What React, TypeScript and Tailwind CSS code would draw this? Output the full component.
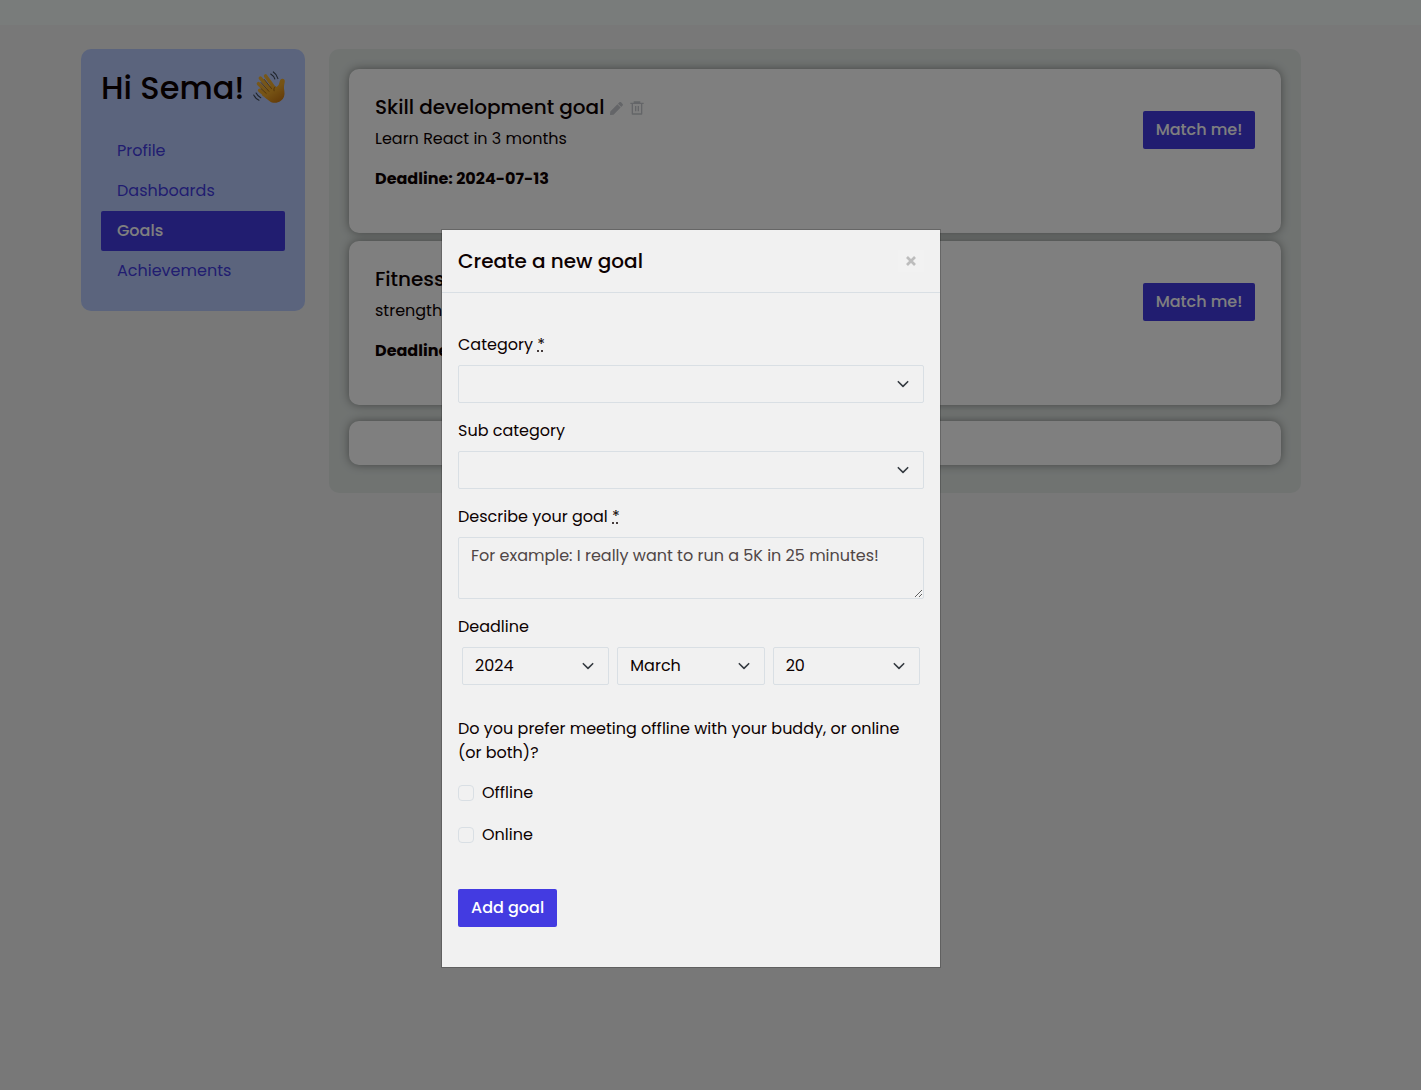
import React from "react";
import { FaPen } from "react-icons/fa";
import { RiDeleteBin6Line } from "react-icons/ri";

const links = ["Profile", "Dashboards", "Goals", "Achievements"];

function WavingHand() {
  return (
    <svg viewBox="0 0 36 36" className="h-[34px] w-[34px] shrink-0" role="img" aria-label="Waving hand">
      <defs>
        <linearGradient id="skin" gradientUnits="userSpaceOnUse" x1="6" y1="6" x2="26" y2="34">
          <stop offset="0" stopColor="#efb238" />
          <stop offset="0.6" stopColor="#eda628" />
          <stop offset="1" stopColor="#c97812" />
        </linearGradient>
      </defs>
      <g stroke="url(#skin)" strokeWidth="3.800" strokeLinecap="round" fill="none">
        <path d="M7 20.500 15 27" />
        <path d="M5.800 13.500 16 23.500" />
        <path d="M7.800 7.500 18.500 20" />
        <path d="M13.300 5.300 22.500 18" />
      </g>
      <path
        d="M12 22.500 15.500 18.500 20 14.500 23.500 17.500c2.300-.6 4-2.400 4.400-5 .4-2.900 1.700-4.600 3.700-4.300 1.900.3 2.400 2 1.900 4-.8 3.500-.9 5.800-.3 9 .7 4.500-.5 8-3.700 10.300-4.200 3-8.800 2.900-12.500-.1L9.500 25.800Z"
        fill="url(#skin)"
      />
      <path
        d="m8.500 18.700 5.500 5M8.500 12.200l8.300 9.300M12 9l7.600 9.600M23.500 16.800c-1.300 1-1.700 2.600-1.200 4.200"
        stroke="#9a5f0c"
        strokeWidth="0.900"
        strokeLinecap="round"
        fill="none"
      />
      <g stroke="#3f4858" strokeWidth="1.200" strokeLinecap="round" fill="none">
        <path d="M18.800 3.200c2 1.200 3.500 3 4.300 5.300M21.500 1c2.500 1.600 4.100 4 4.900 7M.8 25.500c1.200 2.500 3 4.400 5.500 5.500M3.300 23.300c1.100 2.200 2.700 3.800 4.900 4.900" />
      </g>
    </svg>
  );
}

function GoalCard({ title, text, deadline }: { title: string; text: string; deadline: string }) {
  return (
    <article className="mb-2 flex items-start justify-between rounded-[10px] bg-white p-[26px] shadow-[0_0_10px_rgba(0,0,0,0.4)]">
      <div className="pb-4">
        <div className="mb-2 flex items-center text-[#c8cbd0]">
          <h2 className="mr-[6px] text-xl leading-6 font-medium text-[#0d0101]">{title}</h2>
          <button type="button" aria-label="Edit goal" className="mr-[6px] pt-[2px]">
            <FaPen size={13} />
          </button>
          <button type="button" aria-label="Delete goal" className="pt-[2px]">
            <RiDeleteBin6Line size={16} />
          </button>
        </div>
        <p className="mb-4">{text}</p>
        <p className="font-bold">Deadline: {deadline}</p>
      </div>
      <button type="button" className="mt-4 h-[38px] w-28 rounded-[2px] bg-[#433be1] font-medium text-white">
        Match me!
      </button>
    </article>
  );
}

function Select({ id, label, options }: { id: string; label: string; options: string[] }) {
  return (
    <div className="relative min-w-0 flex-1">
      <select
        id={id}
        aria-label={label}
        className="block h-[38px] w-full appearance-none rounded-[2px] border border-[#d9dfe4] bg-[#f1f1f1] pr-9 pl-3"
      >
        {options.map((o) => (
          <option key={o}>{o}</option>
        ))}
      </select>
      <svg viewBox="0 0 16 16" className="pointer-events-none absolute top-[11px] right-[13px] h-4 w-4" aria-hidden="true">
        <path d="m3.300 5.700 4.700 4.700 4.700-4.700" fill="none" stroke="#343a40" strokeWidth="1.600" strokeLinecap="round" strokeLinejoin="round" />
      </svg>
    </div>
  );
}

function Required() {
  return (
    <abbr title="required" className="underline decoration-dotted">
      *
    </abbr>
  );
}

function Modal() {
  return (
    <div className="fixed inset-0 flex items-start justify-center overflow-auto bg-black/50 pt-[229px] pr-[39px]">
      <section
        role="dialog"
        aria-modal="true"
        aria-labelledby="dialog-title"
        className="w-full max-w-[500px] border border-black/20 bg-[#f1f1f1] bg-clip-padding"
      >
        <header className="flex items-center justify-between border-b border-[#d9dfe4] p-4">
          <h2 id="dialog-title" className="text-xl leading-[30px] font-medium">
            Create a new goal
          </h2>
          <button type="button" aria-label="Close" className="flex h-[22px] w-[26px] items-center justify-center bg-[#f2f2f2]">
            <svg viewBox="0 0 10 10" className="h-[10px] w-[10px]" aria-hidden="true">
              <path d="m1 1 8 8M9 1 1 9" stroke="#bdbdbd" strokeWidth="2.700" />
            </svg>
          </button>
        </header>
        <form className="px-4 pt-10 pb-10">
          <label htmlFor="category" className="mb-2 block">
            Category <Required />
          </label>
          <Select id="category" label="Category" options={[""]} />
          <label htmlFor="sub" className="mt-4 mb-2 block">
            Sub category
          </label>
          <Select id="sub" label="Sub category" options={[""]} />
          <label htmlFor="describe" className="mt-4 mb-2 block">
            Describe your goal <Required />
          </label>
          <textarea
            id="describe"
            rows={2}
            placeholder="For example: I really want to run a 5K in 25 minutes!"
            className="block h-[62px] w-full rounded-[2px] border border-[#d9dfe4] bg-[#f1f1f1] px-3 py-[6px] leading-6 placeholder:text-[#4f4646]"
          />
          <label htmlFor="year" className="mt-4 mb-2 block">
            Deadline
          </label>
          <div className="flex gap-2 px-1">
            <Select id="year" label="Year" options={["2024"]} />
            <Select id="month" label="Month" options={["March"]} />
            <Select id="day" label="Day" options={["20"]} />
          </div>
          <fieldset className="mt-8">
            <legend className="mb-4">Do you prefer meeting offline with your buddy, or online (or both)?</legend>
            <div className="flex flex-col items-start gap-[18px]">
              {["Offline", "Online"].map((o) => (
                <label key={o} className="flex items-center gap-2">
                  <input type="checkbox" className="h-4 w-4 appearance-none rounded-[4px] border border-[#d9dfe4]" />
                  {o}
                </label>
              ))}
            </div>
          </fieldset>
          <button type="submit" className="mt-[42px] h-[38px] rounded-[2px] bg-[#433be1] px-[13px] font-medium text-white">
            Add goal
          </button>
        </form>
      </section>
    </div>
  );
}

export default function App() {
  return (
    <div className="min-h-screen bg-[#f1f1f1] font-[Poppins,Inter,sans-serif] text-base text-[#0d0101]">
      <header className="h-[25px] bg-[#f3f9f6]" />
      <div className="flex items-start gap-6 pt-6 pr-[120px] pl-[81px]">
        <aside className="w-56 shrink-0 rounded-[10px] bg-[#b6c9fb] p-5">
          <h1 className="mb-6 flex h-[38px] items-center gap-2 text-[32px] font-medium whitespace-nowrap">
            Hi Sema! <WavingHand />
          </h1>
          <nav>
            {links.map((l) => (
              <a
                key={l}
                href={"#" + l.toLowerCase()}
                className={
                  l === "Goals"
                    ? "block rounded-[2px] bg-[#433be1] px-4 py-2 font-medium text-white"
                    : "block px-4 py-2 text-[#433be1]"
                }
              >
                {l}
              </a>
            ))}
          </nav>
        </aside>
        <main className="min-w-0 flex-1 rounded-[10px] bg-[#e0e6e3] p-5">
          <GoalCard title="Skill development goal" text="Learn React in 3 months" deadline="2024-07-13" />
          <GoalCard title="Fitness goal" text="strength training" deadline="2024-07-13" />
          <div className="mt-4 mb-2 h-11 rounded-[10px] bg-white shadow-[0_0_10px_rgba(0,0,0,0.4)]" />
        </main>
      </div>
      <Modal />
    </div>
  );
}
